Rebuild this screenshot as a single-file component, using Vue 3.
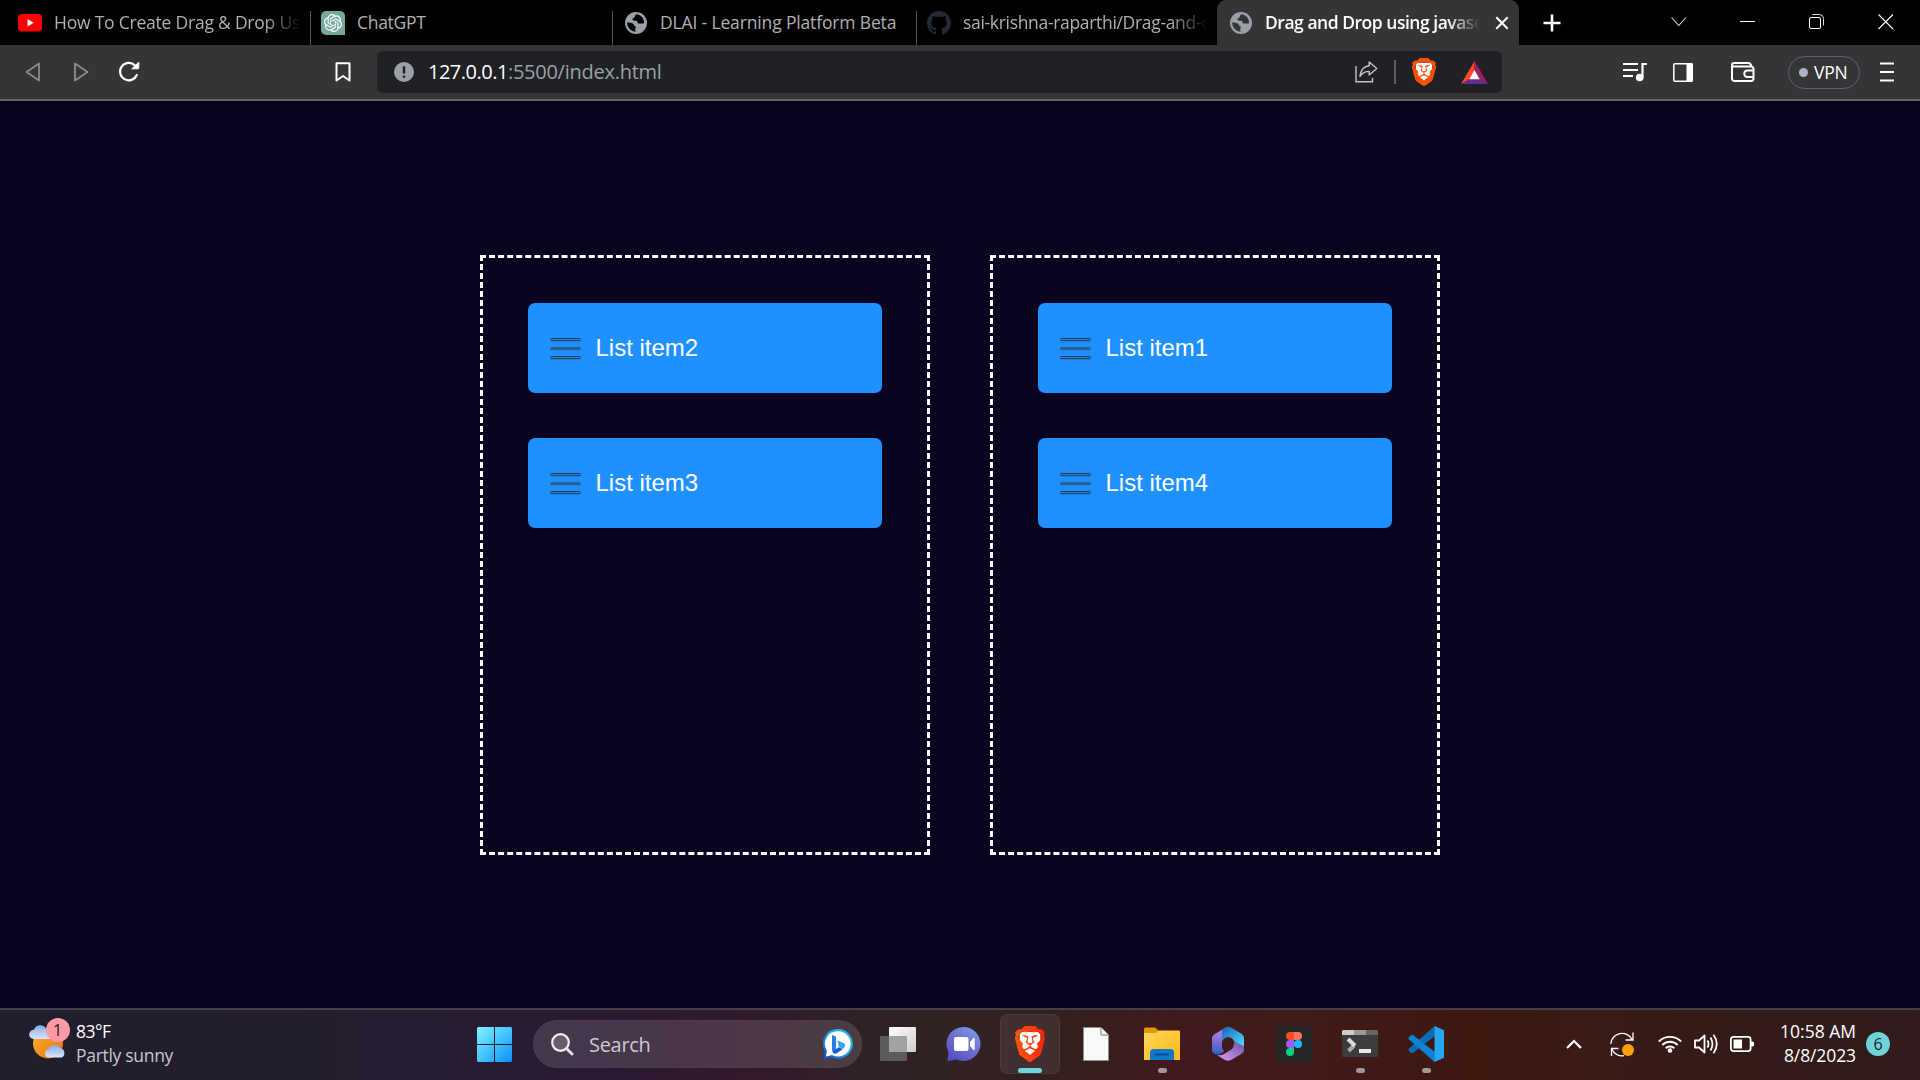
<script setup>
const columns = [
  { id: 'left', items: ['List item2', 'List item3'] },
  { id: 'right', items: ['List item1', 'List item4'] },
]
const lion =
  'M15.68 0l2.096 2.38s1.84-.512 2.709.358c.868.87 1.584 1.638 1.584 1.638l-.562 1.381.715 2.047s-2.104 7.98-2.35 8.955c-.486 1.919-.818 2.66-2.198 3.633-1.38.972-3.884 2.66-4.293 2.916-.409.256-.92.692-1.38.692-.46 0-.97-.436-1.38-.692a185.796 185.796 0 01-4.293-2.916c-1.38-.973-1.712-1.714-2.197-3.633-.247-.975-2.351-8.955-2.351-8.955l.715-2.047-.562-1.381s.716-.768 1.585-1.638c.868-.87 2.708-.358 2.708-.358L8.321 0h7.36zm-3.679 14.936c-.14 0-1.038.317-1.758.69-.72.373-1.242.637-1.409.742-.167.104-.065.301.087.409.152.107 2.194 1.69 2.393 1.866.198.175.489.464.687.464.198 0 .49-.29.688-.464.198-.175 2.24-1.759 2.392-1.866.152-.108.254-.305.087-.41-.167-.104-.689-.368-1.41-.741-.72-.373-1.617-.69-1.757-.69zm0-11.278s-.409.001-1.022.206-1.278.46-1.584.46c-.307 0-2.581-.434-2.581-.434S4.119 7.152 4.119 7.849c0 .697.339.881.68 1.243l2.02 2.149c.192.203.59.511.356 1.066-.235.555-.58 1.26-.196 1.977.384.716 1.042 1.194 1.464 1.115.421-.08 1.412-.598 1.776-.834.364-.237 1.518-1.19 1.518-1.554 0-.365-1.193-1.02-1.413-1.168-.22-.15-1.226-.725-1.247-.95-.02-.227-.012-.293.284-.851.297-.559.831-1.304.742-1.8-.089-.495-.95-.753-1.565-.986-.615-.232-1.799-.671-1.947-.74-.148-.068-.11-.133.339-.175.448-.043 1.719-.212 2.292-.052.573.16 1.552.403 1.632.532.079.13.149.134.067.579-.081.445-.5 2.581-.541 2.96-.04.38-.12.63.288.724.409.094 1.097.256 1.333.256s.924-.162 1.333-.256c.408-.093.329-.344.288-.723-.04-.38-.46-2.516-.541-2.961-.082-.445-.012-.45.067-.579.08-.129 1.059-.372 1.632-.532.573-.16 1.845.009 2.292.052.449.042.487.107.339.175-.148.069-1.332.508-1.947.74-.615.233-1.476.49-1.565.986-.09.496.445 1.241.742 1.8.297.558.304.624.284.85-.02.226-1.026.802-1.247.95-.22.15-1.413.804-1.413 1.169 0 .364 1.154 1.317 1.518 1.554.364.236 1.355.755 1.776.834.422.079 1.08-.4 1.464-1.115.384-.716.039-1.422-.195-1.977-.235-.555.163-.863.355-1.066l2.02-2.149c.341-.362.68-.546.68-1.243 0-.697-2.695-3.96-2.695-3.96s-2.274.436-2.58.436c-.307 0-.972-.256-1.585-.461-.613-.205-1.022-.206-1.022-.206z'
const knot =
  'M22.2819 9.8211a5.9847 5.9847 0 0 0-.5157-4.9108 6.0462 6.0462 0 0 0-6.5098-2.9A6.0651 6.0651 0 0 0 4.9807 4.1818a5.9847 5.9847 0 0 0-3.9977 2.9 6.0462 6.0462 0 0 0 .7427 7.0966 5.98 5.98 0 0 0 .511 4.9107 6.051 6.051 0 0 0 6.5146 2.9001A5.9847 5.9847 0 0 0 13.2599 24a6.0557 6.0557 0 0 0 5.7718-4.2058 5.9894 5.9894 0 0 0 3.9977-2.9001 6.0557 6.0557 0 0 0-.7475-7.0729zm-9.022 12.6081a4.4755 4.4755 0 0 1-2.8764-1.0408l.1419-.0804 4.7783-2.7582a.7948.7948 0 0 0 .3927-.6813v-6.7369l2.02 1.1686a.071.071 0 0 1 .038.052v5.5826a4.504 4.504 0 0 1-4.4945 4.4944zm-9.6607-4.1254a4.4708 4.4708 0 0 1-.5346-3.0137l.142.0852 4.783 2.7582a.7712.7712 0 0 0 .7806 0l5.8428-3.3685v2.3324a.0804.0804 0 0 1-.0332.0615L9.74 19.9502a4.4992 4.4992 0 0 1-6.1408-1.6464zM2.3408 7.8956a4.485 4.485 0 0 1 2.3655-1.9728V11.6a.7664.7664 0 0 0 .3879.6765l5.8144 3.3543-2.0201 1.1685a.0757.0757 0 0 1-.071 0l-4.8303-2.7865A4.504 4.504 0 0 1 2.3408 7.872zm16.5963 3.8558L13.1038 8.364 15.1192 7.2a.0757.0757 0 0 1 .071 0l4.8303 2.7913a4.4944 4.4944 0 0 1-.6765 8.1042v-5.6772a.79.79 0 0 0-.407-.667zm2.0107-3.0231l-.142-.0852-4.7735-2.7818a.7759.7759 0 0 0-.7854 0L9.409 9.2297V6.8974a.0662.0662 0 0 1 .0284-.0615l4.8303-2.7866a4.4992 4.4992 0 0 1 6.6802 4.66zM8.3065 12.863l-2.02-1.1638a.0804.0804 0 0 1-.038-.0567V6.0742a4.4992 4.4992 0 0 1 7.3757-3.4537l-.142.0805L8.704 5.459a.7948.7948 0 0 0-.3927.6813zm1.0976-2.3654l2.602-1.4998 2.6069 1.4998v2.9994l-2.5974 1.4997-2.6067-1.4997Z'
const octocat =
  'M8 0C3.58 0 0 3.58 0 8c0 3.54 2.29 6.53 5.47 7.59.4.07.55-.17.55-.38 0-.19-.01-.82-.01-1.49-2.01.37-2.53-.49-2.69-.94-.09-.23-.48-.94-.82-1.13-.28-.15-.68-.52-.01-.53.63-.01 1.08.58 1.23.82.72 1.21 1.87.87 2.33.66.07-.52.28-.87.51-1.07-1.78-.2-3.64-.89-3.64-3.95 0-.87.31-1.59.82-2.15-.08-.2-.36-1.02.08-2.12 0 0 .67-.21 2.2.82.64-.18 1.32-.27 2-.27s1.36.09 2 .27c1.53-1.04 2.2-.82 2.2-.82.44 1.1.16 1.92.08 2.12.51.56.82 1.27.82 2.15 0 3.07-1.87 3.75-3.65 3.95.29.25.54.73.54 1.48 0 1.07-.01 1.93-.01 2.2 0 .21.15.46.55.38A8.01 8.01 0 0 0 16 8c0-4.42-3.58-8-8-8z'
</script>

<template>
  <div class="screen">
    <header class="tabs">
      <div class="tab t1">
        <svg class="fav" width="24" height="18" viewBox="0 0 24 18"><rect width="24" height="17.5" rx="4" fill="#f00" /><path d="M9.500 5v7.500l6.300-3.700z" fill="#fff" /></svg>
        <span class="title fade">How To Create Drag &amp; Drop Us</span>
      </div>
      <div class="tab t2">
        <svg class="fav" width="24" height="24" viewBox="0 0 24 24"><path d="M5 0h14a5 5 0 0 1 5 5v19H5a5 5 0 0 1-5-5V5a5 5 0 0 1 5-5z" fill="#74aa9c" /><path transform="translate(3 3) scale(.75)" :d="knot" fill="#fff" /></svg>
        <span class="title">ChatGPT</span>
      </div>
      <div class="tab t3">
        <svg class="fav" width="22" height="22" viewBox="0 0 22 22"><circle cx="11" cy="11" r="11" fill="#9aa0a6" /><path d="M12.500 2.200c-2 .2-3 1.400-2.700 2.600.3 1-1.900 1-2.300 2.200-.3 1.200 1 1.800 2.400 1.700 1.800-.1 2.500.3 2.600 1.600 0 1 1 1.400 2 1.300 1.500-.2 2.500.2 4.700-.6A9 9 0 0 0 12.500 2.200zM2.100 10.600c2.600.1 4.800.3 6 1.200 1 .9.5 1.700 1.700 2.100 1.300.4 1.200 1.400.7 2.300-.5 1-.4 2.200.2 3.600A9 9 0 0 1 2.100 10.600z" fill="#000" /></svg>
        <span class="title">DLAI - Learning Platform Beta</span>
      </div>
      <div class="tab t4">
        <svg class="fav" width="24" height="24" viewBox="0 0 16 16"><path :d="octocat" fill="#24292f" /></svg>
        <span class="title fade">sai-krishna-raparthi/Drag-and-d</span>
      </div>
      <div class="tab active">
        <svg class="fav" width="22" height="22" viewBox="0 0 22 22"><circle cx="11" cy="11" r="11" fill="#9aa0a6" /><path d="M12.500 2.200c-2 .2-3 1.400-2.700 2.600.3 1-1.900 1-2.300 2.200-.3 1.200 1 1.800 2.400 1.700 1.800-.1 2.500.3 2.600 1.600 0 1 1 1.400 2 1.300 1.500-.2 2.500.2 4.700-.6A9 9 0 0 0 12.500 2.200zM2.100 10.600c2.600.1 4.800.3 6 1.200 1 .9.5 1.700 1.700 2.100 1.300.4 1.200 1.400.7 2.300-.5 1-.4 2.200.2 3.600A9 9 0 0 1 2.100 10.600z" fill="#353535" /></svg>
        <span class="title fade">Drag and Drop using javasc</span>
        <svg class="shut" width="14" height="14" viewBox="0 0 14 14"><path d="M1.300 1.300l11.400 11.400M12.700 1.300L1.300 12.700" stroke="#fff" stroke-width="2" /></svg>
      </div>
      <svg class="plus" width="18" height="18" viewBox="0 0 18 18"><path d="M9 .5v17M.5 9h17" stroke="#fff" stroke-width="2.600" /></svg>
      <div class="win">
        <svg width="16" height="16" viewBox="0 0 16 16"><path d="M.5 3.500l7.200 8 7.300-8" fill="none" stroke="#ddd" stroke-width="1.100" /></svg>
        <svg width="16" height="16" viewBox="0 0 16 16"><path d="M0 7.500h15" stroke="#fff" /></svg>
        <svg width="16" height="16" viewBox="0 0 16 16"><rect x=".5" y="3.500" width="11" height="11" rx="1.500" fill="none" stroke="#fff" /><path d="M3.500 .5h7a4 4 0 0 1 4 4v7" fill="none" stroke="#ddd" /></svg>
        <svg width="16" height="16" viewBox="0 0 16 16"><path d="M.5 .5l14.500 14.500M15 .5L.5 15" stroke="#fff" stroke-width="1.100" /></svg>
      </div>
    </header>

    <nav class="toolbar">
      <svg class="back" width="16" height="20" viewBox="0 0 16 20"><path d="M14 1.500v17L1.500 10z" fill="none" stroke="#8b8b8b" stroke-width="1.800" stroke-linejoin="round" /></svg>
      <svg class="forward" width="16" height="20" viewBox="0 0 16 20"><path d="M2 1.500v17L14.500 10z" fill="none" stroke="#8b8b8b" stroke-width="1.800" stroke-linejoin="round" /></svg>
      <svg class="reload" width="22" height="22" viewBox="0 0 22 22"><path d="M16.800 4.300A8.700 8.700 0 1 0 18.800 14" fill="none" stroke="#fff" stroke-width="2.200" stroke-linecap="round" /><path d="M13.800 7.800h6a1 1 0 0 0 1-1V1.200z" fill="#fff" stroke="#fff" stroke-linejoin="round" /></svg>
      <svg class="mark" width="16" height="20" viewBox="0 0 16 20"><path d="M1.500 1.200h13v17.300L8 14l-6.500 4.500z" fill="none" stroke="#fff" stroke-width="2" stroke-linejoin="round" /></svg>
      <div class="omnibox">
        <svg class="info" width="20" height="20" viewBox="0 0 20 20"><circle cx="10" cy="10" r="10" fill="#9aa0a6" /><path d="M10 4.200v7.300M10 13.500v2.300" stroke="#202124" stroke-width="2.400" /></svg>
        <span class="url"><b>127.0.0.1</b>:5500/index.html</span>
        <svg class="share" width="23" height="22" viewBox="0 0 23 22"><path d="M1 5v15.800h16.500v-4" fill="none" stroke="#c4c4c4" stroke-width="1.400" /><path d="M14.200 1l7.600 6.500-7.600 6.500v-3.600c-4 0-6.800 1.400-9.200 5C5.600 9.600 8.600 5.200 14.200 4.700z" fill="none" stroke="#c4c4c4" stroke-width="1.400" stroke-linejoin="round" /></svg>
        <i class="split"></i>
        <svg class="shield" width="24" height="28" viewBox="1.900 0 20.200 24" preserveAspectRatio="none"><path d="M5 4h14v12l-7 5-7-5z" fill="#fff" /><path :d="lion" fill="#fb5000" /></svg>
        <svg class="bat" width="27" height="23" viewBox="0 0 27 23"><path d="M13.500 0L0 23l9-5 4.500-8z" fill="#ff4724" /><path d="M13.500 0L27 23l-9-5-4.500-8z" fill="#9e1f63" /><path d="M0 23h27l-9-5H9z" fill="#662d91" /><path d="M13.500 9l5.200 9.300H8.300z" fill="#fff" /></svg>
      </div>
      <svg class="queue" width="24" height="20" viewBox="0 0 24 20"><path d="M0 2h15M0 8h15M0 14h10" stroke="#fff" stroke-width="2.200" /><path d="M19.500 15.500V2H24" fill="none" stroke="#fff" stroke-width="2.200" /><circle cx="16.700" cy="15.500" r="3.800" fill="#fff" /></svg>
      <svg class="side" width="20" height="19" viewBox="0 0 20 19"><rect x=".8" y=".8" width="18.400" height="17.400" rx="1.200" fill="none" stroke="#fff" stroke-width="1.500" /><path d="M13.500 0H18a2 2 0 0 1 2 2v15a2 2 0 0 1-2 2h-4.500z" fill="#fff" /></svg>
      <svg class="wallet" width="24" height="20" viewBox="0 0 24 20"><path d="M1 4V16.500A2.500 2.500 0 0 0 3.500 19H20a2.500 2.500 0 0 0 2.500-2.500V7A2.500 2.500 0 0 0 20 4.500H3A2 2 0 0 1 1 3 2 2 0 0 1 3 1h14.500A2.500 2.500 0 0 1 20 3.500v1M22.500 8.500H16a3.300 3.300 0 0 0 0 6.500h6.500" fill="none" stroke="#fff" stroke-width="2" /></svg>
      <div class="vpn"><i></i><span>VPN</span></div>
      <svg class="menu" width="14" height="20" viewBox="0 0 14 20"><path d="M0 1.500h14M0 10h14M0 18.500h14" stroke="#fff" stroke-width="2" /></svg>
    </nav>

    <main class="page">
      <section v-for="c in columns" :key="c.id" class="box">
        <div v-for="t in c.items" :key="t" class="item" draggable="true">
          <svg width="31" height="22" viewBox="0 0 31 22"><rect x=".5" y=".5" width="30" height="2.200" rx="1" fill="#2b7fd0" stroke="#263c58" /><rect x=".2" y="9" width="30.600" height="3.200" rx="1.500" fill="#28609c" /><rect x=".5" y="18.500" width="30" height="2.200" rx="1" fill="#2b7fd0" stroke="#263c58" /></svg>
          <span>{{ t }}</span>
        </div>
      </section>
    </main>

    <footer class="taskbar">
      <div class="weather">
        <svg width="44" height="46" viewBox="0 0 44 46">
          <defs>
            <linearGradient id="sun" x1="0" y1="0" x2="1" y2="1"><stop offset="0" stop-color="#f9b82c" /><stop offset="1" stop-color="#ee6a12" /></linearGradient>
            <linearGradient id="cloud" x1="0" y1="0" x2="0" y2="1"><stop offset="0" stop-color="#88abe9" /><stop offset="1" stop-color="#dbe7fb" /></linearGradient>
          </defs>
          <circle cx="19" cy="25.500" r="15" fill="url(#sun)" />
          <path d="M4.500 21a4.600 4.600 0 0 1 .5-9.200 6.500 6.500 0 0 1 11.800-1.500 6 6 0 0 1 5 10.700z" fill="url(#cloud)" />
          <path d="M19.500 39.500a4.300 4.300 0 0 1 .5-8.500 6 6 0 0 1 11-1 5 5 0 0 1 1.500 9.500z" fill="url(#cloud)" />
        </svg>
        <b class="count">1</b>
        <div class="lines"><span class="temp">83°F</span><span class="sky">Partly sunny</span></div>
      </div>

      <svg class="start" width="35" height="35" viewBox="0 0 35 35">
        <defs><linearGradient id="win" x1="0" y1="0" x2="35" y2="35" gradientUnits="userSpaceOnUse"><stop offset="0" stop-color="#80f4ff" /><stop offset="1" stop-color="#0a92fb" /></linearGradient></defs>
        <path d="M1 0h16v17H0V1zM18 0h16l1 1v16H18zM0 18h17v17H1l-1-1zM18 18h17v16l-1 1H18z" fill="url(#win)" />
      </svg>

      <div class="search">
        <svg width="23" height="23" viewBox="0 0 23 23"><circle cx="9.500" cy="9.500" r="8.300" fill="#6a5a6b" stroke="#f0eef0" stroke-width="2.200" /><path d="M15.500 15.500l5.500 5.500" stroke="#e4e0e4" stroke-width="3" stroke-linecap="round" /></svg>
        <span>Search</span>
        <svg class="bing" width="30" height="30" viewBox="0 0 30 30">
          <defs><linearGradient id="bg" x1="1" y1="0" x2="0" y2="1"><stop offset="0" stop-color="#2bc3f0" /><stop offset=".5" stop-color="#1f9be8" /><stop offset="1" stop-color="#1a48c8" /></linearGradient></defs>
          <path d="M15 1.200a13.700 13.700 0 1 1-6 26L1.500 29l1.300-7A13.700 13.700 0 0 1 15 1.200z" fill="#fff" stroke="url(#bg)" stroke-width="2.200" />
          <path d="M9 6l4 1.600v12.700L9.800 23 9 21z" fill="#2a7de6" /><path d="M14.500 11.500l7 3c1.200 2-.2 4.500-1.500 5.500l-4-2z" fill="#2fa6ee" /><path d="M9.300 22.500l6.500-4.300 4 2-6.500 4.300q-3 .8-4-2z" fill="#1b56d0" />
        </svg>
      </div>

      <div class="apps">
        <div class="app">
          <svg width="36" height="36" viewBox="0 0 36 36"><defs><linearGradient id="tv" x1="0" y1="0" x2="1" y2="1"><stop offset="0" stop-color="#fff" /><stop offset="1" stop-color="#cfcfcf" /></linearGradient></defs><rect x="9" y="1" width="27" height="25" rx="1" fill="url(#tv)" /><rect y="10" width="27" height="25" rx="1" fill="#5b5b5b" /><path d="M9 10h18v16H9z" fill="#a2a2a2" /></svg>
        </div>
        <div class="app">
          <svg width="36" height="36" viewBox="0 0 36 36"><defs><linearGradient id="chat" x1="1" y1="0" x2=".3" y2="1"><stop offset="0" stop-color="#7ba3f2" /><stop offset=".5" stop-color="#7272ce" /><stop offset="1" stop-color="#5450c8" /></linearGradient></defs><path d="M18 1a17 17 0 1 1-7.500 32.500L1.500 35l1-9A17 17 0 0 1 18 1z" fill="url(#chat)" /><rect x="8" y="11" width="14.500" height="14" rx="2" fill="#fff" /><path d="M24 16l3.500-4h1.200v12h-1.200L24 20z" fill="#fff" /></svg>
        </div>
        <div class="app current">
          <svg width="30" height="36" viewBox="1.900 0 20.200 24" preserveAspectRatio="none"><defs><linearGradient id="lg" x1="0" y1="0" x2="1" y2="0"><stop offset="0" stop-color="#ff5500" /><stop offset=".5" stop-color="#ff4015" /><stop offset="1" stop-color="#ff2000" /></linearGradient></defs><path d="M5 4h14v12l-7 5-7-5z" fill="#fff" /><path :d="lion" fill="url(#lg)" /></svg>
          <i class="bar"></i>
        </div>
        <div class="app">
          <svg width="26" height="34" viewBox="0 0 26 34"><path d="M.5 .5h17.500l7.500 7.500v25.500H.5z" fill="#f9f9f9" stroke="#8d8d8d" /><path d="M18 .5V8h7.500" fill="#f9f9f9" stroke="#777" /></svg>
        </div>
        <div class="app">
          <svg width="36" height="34" viewBox="0 0 36 34"><defs><linearGradient id="fo" x1="0" y1="0" x2="1" y2="1"><stop offset="0" stop-color="#ffd75e" /><stop offset="1" stop-color="#fcb813" /></linearGradient></defs><path d="M0 10V2a1.500 1.500 0 0 1 1.500-1.500H11L15 4v6z" fill="#e09c05" /><path d="M0 6h12l3-2.500h20a1 1 0 0 1 1 1V33H0z" fill="url(#fo)" /><path d="M6 33v-7.500a3.500 3.500 0 0 1 3.500-3.500h17a3.500 3.500 0 0 1 3.500 3.500V33z" fill="#0f78ca" /><path d="M11 27.500h14" stroke="#0a4a8a" stroke-width="1.800" /></svg>
          <i class="dot"></i>
        </div>
        <div class="app">
          <svg width="36" height="36" viewBox="0 0 36 36"><defs><linearGradient id="ma" x1="0" y1="0" x2="0" y2="1"><stop offset="0" stop-color="#b98ae8" /><stop offset=".6" stop-color="#7a66d4" /><stop offset="1" stop-color="#1e68c8" /></linearGradient><linearGradient id="mb" x1="0" y1="0" x2="1" y2="1"><stop offset="0" stop-color="#1c5fc0" /><stop offset="1" stop-color="#4fe0ff" /></linearGradient><linearGradient id="mc" x1="0" y1="1" x2="1" y2="0"><stop offset="0" stop-color="#e09cfa" /><stop offset="1" stop-color="#6a55a8" /></linearGradient></defs><path d="M16 1.500L4 8.500Q2 10 2 12v12q0 2 2 3.500 4 2 7 0l3-2-2-4V8z" fill="url(#ma)" /><path d="M12 5q0-2 3-3.500t6 0l11 6.500q2 1.500 2 4v9l-10-5.500q-1-4-6-4.500-5 1-6 5z" fill="url(#mb)" /><path d="M34 20v4q0 2-2 3.500l-11 6.500q-3 1.500-6 0l-8-5q4 1 7-1l8-5q2-2 2-7z" fill="url(#mc)" /></svg>
        </div>
        <div class="app">
          <svg width="36" height="36" viewBox="0 0 36 36"><rect width="36" height="36" rx="2" fill="#262626" /><path d="M18 6h-4a4 4 0 0 0 0 8h4z" fill="#f24e1e" /><path d="M18 6h4a4 4 0 0 1 0 8h-4z" fill="#ff7262" /><path d="M18 14h-4a4 4 0 0 0 0 8h4z" fill="#a259ff" /><circle cx="22" cy="18" r="4" fill="#1abcfe" /><path d="M18 22h-4a4 4 0 1 0 4 4z" fill="#0acf83" /></svg>
        </div>
        <div class="app">
          <svg width="36" height="36" viewBox="0 0 36 36"><rect y="4" width="36" height="27" rx="1.500" fill="#3c3c3c" /><path d="M1 4h11v5H0V5z" fill="#ccc" /><path d="M12 4h12v5H12z" fill="#999" /><path d="M24 4h11l1 1v4H24z" fill="#666" /><path d="M12 19.500L6.500 25" stroke="#a8a8a8" stroke-width="4" /><path d="M6 13l7 6.800" stroke="#dcdcdc" stroke-width="4" /><rect x="17" y="23" width="12" height="4" fill="#e8e8e8" /></svg>
          <i class="dot"></i>
        </div>
        <div class="app">
          <svg width="36" height="36" viewBox="0 0 36 36"><path d="M26.500 0L.8 22.800q-.8 1 0 2l2.200 2q1 .8 2.200 0L27 10z" fill="#0a6cb4" /><path d="M26.500 36L.8 13.200q-.8-1 0-2l2.200-2q1-.8 2.200 0L27 26z" fill="#0d84d2" /><path d="M26.500 0L36 4.200v27.600L26.500 36z" fill="#28a5f2" /></svg>
          <i class="dot"></i>
        </div>
      </div>

      <div class="tray">
        <svg class="up" width="16" height="10" viewBox="0 0 16 10"><path d="M1 9l7-7 7 7" fill="none" stroke="#fff" stroke-width="2.200" /></svg>
        <svg class="sync" width="25" height="25" viewBox="0 0 25 25"><path d="M.8 12A11.200 11.200 0 0 1 22 7.500M23 .5v7.500h-7.500M8.500 16.500H1.500v7.500M2 17.500A11.200 11.200 0 0 0 14 23.700" fill="none" stroke="#fff" stroke-width="1.300" /><circle cx="18" cy="18" r="6" fill="#ff9d0a" /></svg>
        <svg class="wifi" width="24" height="18" viewBox="0 0 24 18"><path d="M.8 6.500a15.800 15.800 0 0 1 22.400 0M4.300 10a10.800 10.800 0 0 1 15.400 0M7.700 13.300a6.200 6.200 0 0 1 8.600 0" fill="none" stroke="#fff" stroke-width="1.900" /><circle cx="12" cy="15.500" r="2.300" fill="#fff" /></svg>
        <svg class="vol" width="25" height="20" viewBox="0 0 25 20"><path d="M1 6.500v7h4l5.500 5V1.500L5 6.500z" fill="none" stroke="#fff" stroke-width="1.800" stroke-linejoin="round" /><path d="M13.500 6.500q2 3.500 0 7M16.500 3.500q4 6.500 0 13M19.500 .8q6.500 9.200 0 18.400" fill="none" stroke="#fff" stroke-width="1.800" /></svg>
        <svg class="batt" width="24" height="16" viewBox="0 0 24 16"><rect x=".9" y=".9" width="19.700" height="14.200" rx="2.500" fill="none" stroke="#fff" stroke-width="1.800" /><rect x="3.500" y="3.500" width="8.500" height="9" fill="#fff" /><path d="M21 5.500h1.500a1.500 1.500 0 0 1 1.500 1.500v2a1.500 1.500 0 0 1-1.500 1.500H21z" fill="#fff" /></svg>
        <div class="clock"><span class="time">10:58 AM</span><span class="date">8/8/2023</span></div>
        <b class="note">6</b>
      </div>
    </footer>
  </div>
</template>

<style>
html, body { margin: 0; background: #0a0320; overflow: hidden; }
</style>

<style scoped>
.screen { display: flex; flex-direction: column; width: 1920px; height: 1080px; overflow: hidden; font-family: "Open Sans", "Noto Sans", sans-serif; color: #fff; background: #0a0320; }
svg { display: block; flex: none; }
span { white-space: nowrap; }

.tabs { display: flex; align-items: flex-start; height: 45px; background: #000; }
.tab { display: flex; align-items: center; box-sizing: border-box; height: 45px; font-size: 17.5px; color: #b0b0b0; flex: none; }
.tab .title { height: 26px; line-height: 24px; overflow: hidden; }
.t1, .t2, .t3 { background: linear-gradient(#555, #555) no-repeat right 11px / 1.5px 34px; }
.t1 { width: 311px; padding-left: 18px; gap: 12px; }
.t1 .title { width: 250px; letter-spacing: -0.22px; }
.t2 { width: 302px; padding-left: 10px; gap: 12px; }
.t2 .title { letter-spacing: -0.3px; }
.t3 { width: 304px; padding-left: 12px; gap: 13px; }
.t3 .title { letter-spacing: -0.15px; }
.t4 { width: 300px; padding-left: 10px; gap: 12px; }
.t4 .title { width: 247px; letter-spacing: -0.32px; }
.fade { -webkit-mask-image: linear-gradient(90deg, #000 84%, transparent 99%); mask-image: linear-gradient(90deg, #000 84%, transparent 99%); }
.active { width: 302px; padding-left: 13px; gap: 13px; background: #353535; border-radius: 9px 9px 0 0; color: #fff; font-weight: 600; }
.active .title { width: 217px; letter-spacing: -0.48px; }
.plus { margin: 14px 0 0 24px; }
.win { display: flex; gap: 53px; margin: 14px 0 0 110px; }

.toolbar { display: flex; align-items: center; box-sizing: border-box; height: 56px; background: #353535; border-bottom: 2px solid #666; }
.back { margin-left: 25px; }
.forward { margin-left: 32px; }
.reload { margin-left: 29px; }
.mark { margin-left: 195px; }
.omnibox { display: flex; align-items: center; width: 1125px; height: 42px; margin: 0 0 0 26px; background: #202124; border-radius: 6px; }
.info { margin-left: 17px; }
.url { flex: 1; margin-left: 14px; font-size: 20px; line-height: 28px; letter-spacing: -0.25px; color: #9aa0a6; }
.url b { font-weight: 400; color: #fff; letter-spacing: -0.5px; }
.split { width: 2px; height: 24px; margin: 0 16px; background: #5d5e60; }
.bat { margin: 0 14px 0 25px; }
.queue { margin-left: 121px; }
.side { margin-left: 26px; }
.wallet { margin-left: 38px; }
.vpn { display: flex; align-items: center; box-sizing: border-box; width: 72px; height: 33px; margin-left: 33px; padding-left: 10px; border: 1.5px solid #5f6078; border-radius: 17px; font-size: 17.5px; letter-spacing: -0.2px; }
.vpn i { width: 9px; height: 9px; margin-right: 6px; border-radius: 50%; background: #b0b3c8; }
.menu { margin-left: 20px; }

.page { flex: 1; display: flex; justify-content: center; align-items: center; gap: 60px; min-height: 0; background: #0a0320; }
.box { box-sizing: border-box; width: 450px; height: 600px; padding: 45px; border: 3px dashed #fff; }
.item { display: flex; align-items: center; box-sizing: border-box; height: 90px; margin-bottom: 45px; padding-left: 22px; gap: 14.5px; background: #1e90ff; border-radius: 7px; font: 24px/28px "Liberation Sans", sans-serif; }
.item svg { margin-top: 2px; }

.taskbar { display: flex; align-items: flex-start; box-sizing: border-box; height: 72px; border-top: 2px solid #45404a; background: linear-gradient(90deg, #211e2d 0, #221e2d 300px, #261c31 440px, #2a1a31 600px, #321a2d 740px, #2f2225 880px, #33201f 1060px, #42191d 1180px, #421a19 1300px, #3c1811 1480px, #391b16 1600px, #331b17 1720px, #301b1d 1920px); }
.weather { position: relative; display: flex; width: 448px; padding-left: 29px; }
.weather svg { margin-top: 8px; }
.count { position: absolute; left: 45.5px; top: 7.5px; width: 24px; height: 24px; border-radius: 50%; background: #ff99a4; color: #1a1a1a; font: 400 16px/24px "Open Sans", sans-serif; text-align: center; }
.lines { display: flex; flex-direction: column; margin-left: 3px; padding-top: 9px; font-size: 17.5px; line-height: 24px; letter-spacing: -0.3px; }
.temp { letter-spacing: -0.5px; }
.sky { color: #c9c7cc; }
.start { margin-top: 17px; }
.search { display: flex; align-items: center; box-sizing: border-box; width: 329px; height: 48px; margin: 10px 0 0 21px; padding: 0 8px 0 17px; border: 1px solid rgba(255, 255, 255, .03); border-radius: 24px; background: rgba(255, 255, 255, .13); }
.search span { flex: 1; margin: 1px 0 0 15px; font-size: 20px; line-height: 26px; color: #cfc8cf; letter-spacing: -0.3px; }
.apps { display: flex; gap: 6px; margin: 4px 0 0 6px; }
.app { position: relative; display: flex; align-items: center; justify-content: center; width: 60px; height: 60px; box-sizing: border-box; }
.current { background: rgba(255, 255, 255, .07); border-radius: 7px; box-shadow: inset 0 0 0 1px rgba(255, 255, 255, .06); }
.bar, .dot { position: absolute; bottom: 1px; height: 5px; border-radius: 3px; }
.bar { width: 24px; background: #72d3dd; }
.dot { width: 9px; background: #a3979a; }
.tray { display: flex; align-items: center; height: 68px; margin-left: 110px; }
.sync { margin-left: 28px; }
.wifi { margin-left: 23px; }
.vol { margin-left: 12px; }
.batt { margin-left: 11px; }
.clock { display: flex; flex-direction: column; align-items: flex-end; width: 102px; margin-top: -2px; font-size: 17.5px; line-height: 24px; }
.time { letter-spacing: 0; }
.date { letter-spacing: -0.1px; }
.note { width: 24px; height: 24px; margin-left: 10px; border-radius: 50%; background: #6fd3dc; color: #1c1c1c; font: 400 16px/24px "Open Sans", sans-serif; text-align: center; }
</style>
